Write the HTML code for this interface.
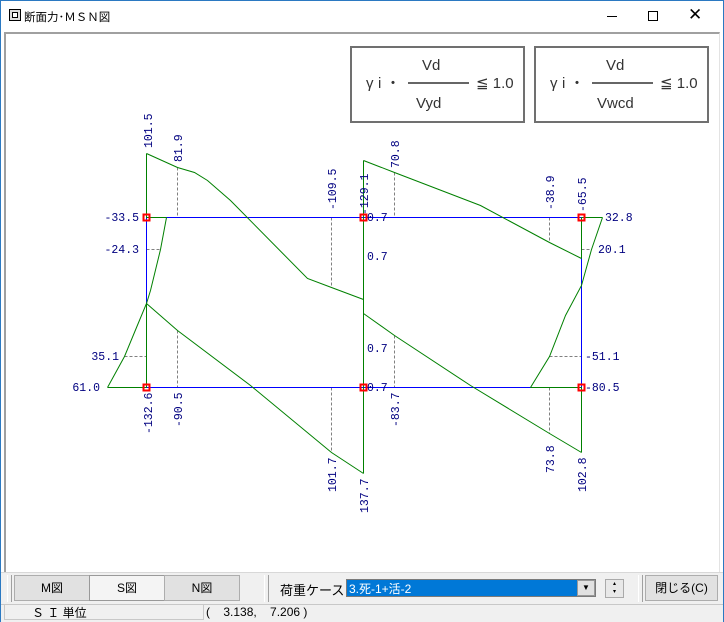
<!DOCTYPE html>
<html><head><meta charset="utf-8"><style>
body{margin:0;width:724px;height:622px;overflow:hidden;background:#fff;font-family:"Liberation Sans","Noto Sans CJK JP",sans-serif;}
.abs{position:absolute;}
.btn{position:absolute;top:575px;height:26px;background:#e1e1e1;border:1px solid #adadad;box-sizing:border-box;font-size:12px;text-align:center;line-height:24px;color:#000;}
</style></head><body>
<div class="abs" style="left:0;top:0;width:724px;height:622px;border:1px solid #2b79c2;box-sizing:border-box;"></div>
<!-- title -->
<div class="abs" style="left:9px;top:9px;width:12px;height:12px;border:1px solid #000;box-sizing:border-box;background:#ddd;"><div style="margin:2px;width:6px;height:6px;border:1px solid #000;box-sizing:border-box;background:#fff"></div></div>
<div class="abs" style="left:24px;top:9px;font-size:11.5px;">断面力･ＭＳＮ図</div>
<div class="abs" style="left:607px;top:16px;width:10px;height:1px;background:#000"></div>
<div class="abs" style="left:648px;top:11px;width:10px;height:10px;border:1px solid #000;box-sizing:border-box"></div>
<div class="abs" style="left:688px;top:5px;font-size:17px;font-weight:300">✕</div>
<!-- client frame -->
<div class="abs" style="left:4px;top:32px;width:716px;height:541px;border-top:2px solid #a0a0a0;border-left:2px solid #a0a0a0;border-right:1px solid #e3e3e3;box-sizing:border-box"></div>
<svg class="abs" style="left:0;top:0" width="724" height="572" font-family="Liberation Mono,monospace" font-size="11.5">
<rect x="351" y="47" width="173" height="75" fill="none" stroke="#707070" stroke-width="2"/>
<rect x="535" y="47" width="173" height="75" fill="none" stroke="#707070" stroke-width="2"/>
<g font-family="Liberation Sans,sans-serif" font-size="15" fill="#333">
<text x="422" y="70">Vd</text><text x="416" y="108">Vyd</text>
<text x="366" y="88">γ</text><text x="378" y="88">i ・</text>
<line x1="408" y1="83" x2="469" y2="83" stroke="#333" stroke-width="1.5"/>
<text x="476" y="88">≦ 1.0</text>
<text x="606" y="70">Vd</text><text x="597" y="108">Vwcd</text>
<text x="550" y="88">γ</text><text x="562" y="88">i ・</text>
<line x1="592" y1="83" x2="653" y2="83" stroke="#333" stroke-width="1.5"/>
<text x="660" y="88">≦ 1.0</text>
</g>
<g transform="translate(0.5,0.5)">
<g stroke="#808080" stroke-dasharray="3,2" fill="none" shape-rendering="crispEdges">
<path d="M177 167V217M177 330V387M331 217V287M331 387V452M394 172V217M394 335V387M549 217V242M549 387V433M146 249H161M124 356H146M581 249H591M549 356H581"/>
</g>
<g stroke="#0000ff" fill="none" shape-rendering="crispEdges"><path d="M146 217H581M146 387H581M146 217V387M363 160V473M581 217V387"/></g>
<g stroke="#008000" fill="none">
<path shape-rendering="crispEdges" d="M146 153V217M146 303V387M363 160V473M581 217V258M581 387V452M107 387H146M146 217H166M530 387H581M581 217H602"/>
<path d="M146 153L177 167L194 172L207 180L230 200L307 278L331 287L363 299"/>
<path d="M146 303L177 330L250 385L331 452L363 473"/>
<path d="M166 217L160 249L150 290L146 303L136 327L124 356L107 387"/>
<path d="M363 160L394 172L480 205L549 242L581 258"/>
<path d="M363 313L394 335L470 385L549 433L581 452"/>
<path d="M602 217L591 249L581 285L565 315L549 356L530 387"/>
</g>
<g fill="none" stroke="#f00" stroke-width="2" shape-rendering="crispEdges">
<rect x="143" y="214" width="6" height="6"/><rect x="360" y="214" width="6" height="6"/><rect x="578" y="214" width="6" height="6"/>
<rect x="143" y="384" width="6" height="6"/><rect x="360" y="384" width="6" height="6"/><rect x="578" y="384" width="6" height="6"/>
</g>
</g>
<g fill="#000080">
<text x="139" y="221" text-anchor="end">-33.5</text>
<text x="139" y="253" text-anchor="end">-24.3</text>
<text x="119" y="360" text-anchor="end">35.1</text>
<text x="100" y="391" text-anchor="end">61.0</text>
<text x="367" y="221">0.7</text><text x="367" y="260">0.7</text><text x="367" y="352">0.7</text><text x="367" y="391">0.7</text>
<text x="605" y="221">32.8</text><text x="598" y="253">20.1</text>
<text x="585" y="360">-51.1</text><text x="585" y="391">-80.5</text>
<g>
<text transform="translate(152,148) rotate(-90)">101.5</text>
<text transform="translate(182,162) rotate(-90)">81.9</text>
<text transform="translate(336,210) rotate(-90)">-109.5</text>
<text transform="translate(368,215) rotate(-90)">-129.1</text>
<text transform="translate(399,168) rotate(-90)">70.8</text>
<text transform="translate(554,210) rotate(-90)">-38.9</text>
<text transform="translate(586,212) rotate(-90)">-65.5</text>
<text transform="translate(152,434) rotate(-90)">-132.6</text>
<text transform="translate(182,427) rotate(-90)">-90.5</text>
<text transform="translate(336,492) rotate(-90)">101.7</text>
<text transform="translate(368,513) rotate(-90)">137.7</text>
<text transform="translate(399,427) rotate(-90)">-83.7</text>
<text transform="translate(554,473) rotate(-90)">73.8</text>
<text transform="translate(586,492) rotate(-90)">102.8</text>
</g></g>
</svg>
<!-- toolbar -->
<div class="abs" style="left:1px;top:572px;width:722px;height:32px;background:#f0f0f0;border-top:1px solid #d8d8d8"></div>
<div class="abs" style="left:7px;top:575px;width:3px;height:27px;border-left:1px solid #fff;border-right:1px solid #a0a0a0"></div>
<div class="btn" style="left:14px;width:76px;">M図</div>
<div class="btn" style="left:89px;width:76px;background:#f4f4f4;border-color:#999">S図</div>
<div class="btn" style="left:164px;width:76px;">N図</div>
<div class="abs" style="left:264px;top:575px;width:3px;height:27px;border-left:1px solid #fff;border-right:1px solid #a0a0a0"></div>
<div class="abs" style="left:280px;top:580px;font-size:13px">荷重ケース</div>
<div class="abs" style="left:346px;top:579px;width:250px;height:18px;border:1px solid #7a7a7a;box-sizing:border-box;background:#0078d7;"></div>
<div class="abs" style="left:349px;top:580px;font-size:12px;color:#fff">3.死-1+活-2</div>
<div class="abs" style="left:577px;top:580px;width:18px;height:16px;background:#e1e1e1;border:1px solid #999;box-sizing:border-box;font-size:8px;text-align:center;line-height:14px">▼</div>
<div class="abs" style="left:605px;top:579px;width:19px;height:19px;background:#e8e8e8;border:1px solid #aaa;box-sizing:border-box;font-size:6px;text-align:center;line-height:8px">▴<br>▾</div>
<div class="abs" style="left:638px;top:575px;width:3px;height:27px;border-left:1px solid #fff;border-right:1px solid #a0a0a0"></div>
<div class="btn" style="left:645px;width:73px;">閉じる(C)</div>
<!-- status -->
<div class="abs" style="left:1px;top:604px;width:722px;height:17px;background:#f0f0f0;border-top:1px solid #c8c8c8"></div>
<div class="abs" style="left:4px;top:605px;width:200px;height:15px;border:1px solid #c8c8c8;border-top:none;box-sizing:border-box"></div>
<div class="abs" style="left:32px;top:604px;font-size:12px">Ｓ Ｉ 単位</div>
<div class="abs" style="left:206px;top:605px;font-size:12px">(&nbsp;&nbsp;&nbsp; 3.138,&nbsp;&nbsp;&nbsp; 7.206 )</div>
</body></html>
